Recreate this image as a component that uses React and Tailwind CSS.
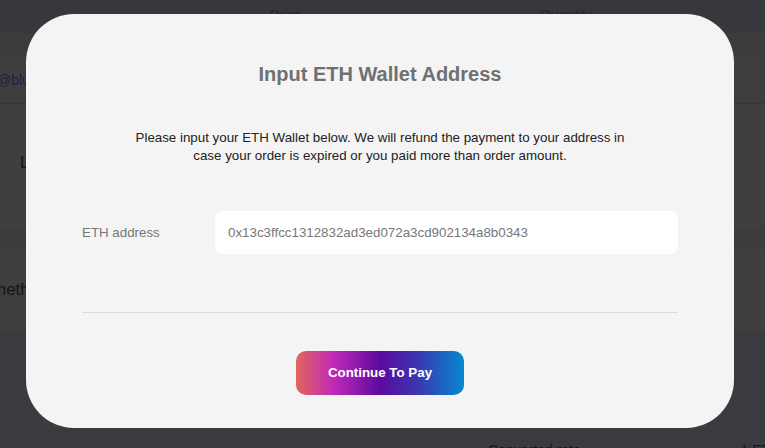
import React, { useState } from "react";

const font = { fontFamily: '"Liberation Sans", Arial, sans-serif' };

const App = () => {
    const [address, setAddress] = useState("0x13c3ffcc1312832ad3ed072a3cd902134a8b0343");

    return (
        <div className="relative w-[765px] h-[448px] overflow-hidden bg-[#3a3b3f]" style={font}>
            {/* page behind the dialog, already dimmed */}
            <div className="flex flex-col whitespace-nowrap">
                <div className="h-[33px] bg-[#37383b] flex text-[14px] text-[#26272a]">
                    <span className="ml-[270px] mt-[5px]">Price</span>
                    <span className="ml-[238px] mt-[5px]">Quantity</span>
                </div>
                <div className="h-[24px] bg-[#3c3c3c]"></div>
                <div className="h-[47px] bg-[#3e3e3e] border-b border-[#363636] flex items-center text-[14px] text-[#1e1e4a]">
                    <span className="-ml-[3px]">@bluewave</span>
                </div>
                <div className="h-[123px] bg-[#3f3f3f] flex items-center text-[17px] text-[#141414]">
                    <span className="ml-[20px] -mt-[6px]">Loading</span>
                </div>
                <div className="h-[23px] bg-[#3d3d3d]"></div>
                <div className="h-[80px] bg-[#3f3f3f] flex items-center text-[17px] text-[#141414]">
                    <span className="-ml-[8px]">method</span>
                </div>
                <div className="h-[118px] bg-[#3a3b3f] flex items-start text-[14px] text-[#161619]">
                    <span className="ml-[488px] mt-[110px]">Converted rate</span>
                    <span className="ml-[160px] mt-[110px]">1 ETH</span>
                </div>
            </div>

            {/* dialog */}
            <div className="absolute inset-0 flex items-start pl-[26px] pt-[14px]">
                <div className="w-[708px] h-[414px] bg-[#f4f4f4] rounded-[48px] px-14 pt-[48px] flex flex-col">
                    <h2 className="text-[20px] leading-[24px] font-bold text-[#707070] text-center">
                        Input ETH Wallet Address
                    </h2>
                    <p className="w-[500px] mx-auto mt-[43px] text-[13.33px] leading-[18px] text-[#222] text-center">
                        Please input your ETH Wallet below. We will refund the payment to your address in case your order is expired or you paid more than order amount.
                    </p>
                    <div className="flex items-center mt-[46px]">
                        <label className="w-[133px] text-[13.33px] text-[#777]">ETH address</label>
                        <input
                            value={address}
                            onChange={(e) => setAddress(e.target.value)}
                            className="flex-1 h-[43px] bg-white rounded-[8px] px-[13px] text-[13.33px] text-[#777] outline-none"
                            style={font}
                        />
                    </div>
                    <div className="mt-[58px] border-t border-[#dcdcdc]"></div>
                    <div className="flex justify-center mt-[38px]">
                        <button
                            className="w-[168px] h-[44px] rounded-[10px] text-white text-[13.33px] font-bold bg-[linear-gradient(90deg,#e2665a_0%,#c22ab8_22%,#5c0aa0_50%,#3b35b0_72%,#0789d0_100%)]"
                            style={font}
                        >
                            Continue To Pay
                        </button>
                    </div>
                </div>
            </div>
        </div>
    );
};

export default App;
